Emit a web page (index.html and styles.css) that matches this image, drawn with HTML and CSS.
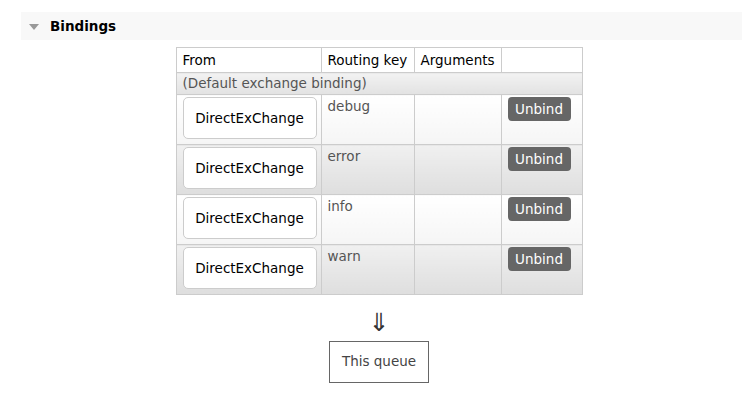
FILE: index.html
```html
<!DOCTYPE html>
<html>
<head>
<meta charset="utf-8">
<link rel="stylesheet" href="styles.css">
</head>
<body>
<div class="section">
  <h2 class="section-title"><span class="tri"></span>Bindings</h2>
  <div class="content">
    <table class="bindings">
      <thead>
        <tr><th class="c-from">From</th><th class="c-key">Routing key</th><th class="c-args">Arguments</th><th class="c-act"></th></tr>
      </thead>
      <tbody>
        <tr class="default"><td colspan="4">(Default exchange binding)</td></tr>
        <tr class="alt2">
          <td class="from"><div class="xbox">DirectExChange</div></td>
          <td class="key">debug</td><td class="args"></td>
          <td class="act"><button class="unbind">Unbind</button></td>
        </tr>
        <tr class="alt1">
          <td class="from"><div class="xbox">DirectExChange</div></td>
          <td class="key">error</td><td class="args"></td>
          <td class="act"><button class="unbind">Unbind</button></td>
        </tr>
        <tr class="alt2">
          <td class="from"><div class="xbox">DirectExChange</div></td>
          <td class="key">info</td><td class="args"></td>
          <td class="act"><button class="unbind">Unbind</button></td>
        </tr>
        <tr class="alt1">
          <td class="from"><div class="xbox">DirectExChange</div></td>
          <td class="key">warn</td><td class="args"></td>
          <td class="act"><button class="unbind">Unbind</button></td>
        </tr>
      </tbody>
    </table>
    <div class="arrow">&#8659;</div>
    <div class="queue">This queue</div>
  </div>
</div>
</body>
</html>
```
FILE: styles.css
```css
html, body {
  margin: 0;
  padding: 0;
  background: #fff;
}
body {
  font-family: "DejaVu Sans", Verdana, sans-serif;
  font-size: 13.5px;
  color: #444;
}
.section {
  padding: 12px 0 0 21px;
}
.section-title {
  margin: 0;
  height: 28px;
  background: #f8f8f8;
  display: flex;
  align-items: center;
  font-size: 13.5px;
  font-weight: bold;
  color: #000;
  padding-left: 8px;
}
.tri {
  width: 0;
  height: 0;
  border-left: 5px solid transparent;
  border-right: 5px solid transparent;
  border-top: 6px solid #999;
  margin-right: 11px;
  margin-top: 1px;
}
.content {
  display: flex;
  flex-direction: column;
  align-items: center;
  margin-right: 5px;
  padding-top: 7px;
}
.bindings {
  border-collapse: collapse;
  width: 407px;
}
.bindings th, .bindings td {
  border: 1px solid #ccc;
  text-align: left;
  vertical-align: top;
}
.bindings th {
  font-weight: normal;
  color: #000;
  background: #fff;
  padding: 4px 6px;
  height: 16px;
  line-height: 16px;
}
.c-from { width: 132px; }
.c-key { width: 80px; }
.c-args { width: 74px; }
.default td {
  background: linear-gradient(#f2f2f2, #e2e2e2);
  padding: 2px 6px 3px;
  line-height: 16px;
  color: #555;
}
.alt1 td {
  background: linear-gradient(#f0f0f0, #dedede);
}
.alt2 td {
  background: linear-gradient(#fff, #f5f5f5);
}
.bindings td.from {
  padding: 2px 4px 5px 6px;
}
.xbox {
  height: 40px;
  border: 1px solid #ccc;
  border-radius: 5px;
  background: #fff;
  display: flex;
  align-items: center;
  justify-content: center;
  color: #000;
}
.bindings td.key {
  padding: 3px 6px;
  line-height: 16px;
  color: #555;
}
.bindings td.act {
  padding: 2px 6px;
}
.unbind {
  font-family: inherit;
  font-size: 13.5px;
  color: #fff;
  background: #666;
  border: none;
  border-radius: 4px;
  height: 24px;
  width: 63px;
  padding: 0;
  display: block;
}
.arrow {
  margin-top: 8px;
  height: 36px;
  font-family: "Noto Sans CJK JP", "DejaVu Sans", sans-serif;
  font-size: 25px;
  line-height: 34px;
  color: #333;
}
.queue {
  margin-top: 2px;
  border: 1px solid #666;
  padding: 11px 12px 12px;
  line-height: 17px;
  color: #444;
}
```
